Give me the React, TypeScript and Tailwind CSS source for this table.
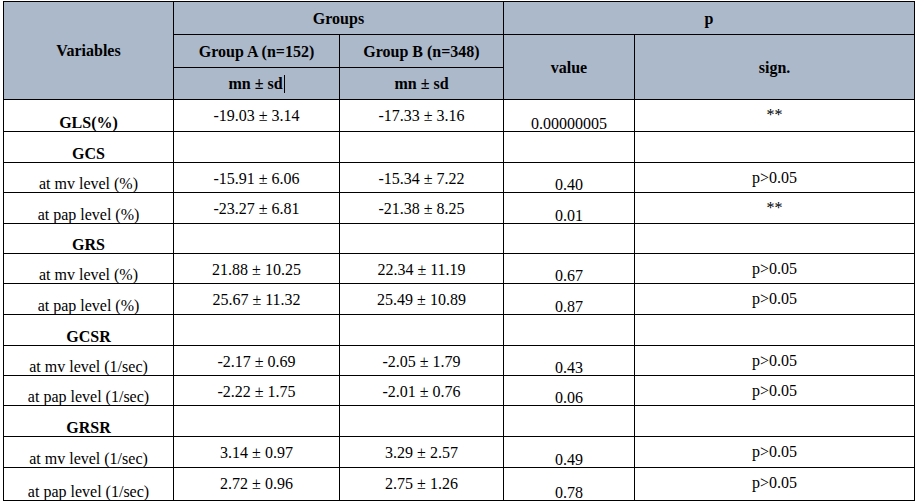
import React from "react";

type Row = { label: string; bold?: boolean; a?: string; b?: string; v?: string; s?: string };

const rows: Row[] = [
  { label: "GLS(%)", bold: true, a: "-19.03 ± 3.14", b: "-17.33 ± 3.16", v: "0.00000005", s: "**" },
  { label: "GCS", bold: true },
  { label: "at mv level (%)", a: "-15.91 ± 6.06", b: "-15.34 ± 7.22", v: "0.40", s: "p>0.05" },
  { label: "at pap level (%)", a: "-23.27 ± 6.81", b: "-21.38 ± 8.25", v: "0.01", s: "**" },
  { label: "GRS", bold: true },
  { label: "at mv level (%)", a: "21.88 ± 10.25", b: "22.34 ± 11.19", v: "0.67", s: "p>0.05" },
  { label: "at pap level (%)", a: "25.67 ± 11.32", b: "25.49 ± 10.89", v: "0.87", s: "p>0.05" },
  { label: "GCSR", bold: true },
  { label: "at mv level (1/sec)", a: "-2.17 ± 0.69", b: "-2.05 ± 1.79", v: "0.43", s: "p>0.05" },
  { label: "at pap level (1/sec)", a: "-2.22 ± 1.75", b: "-2.01 ± 0.76", v: "0.06", s: "p>0.05" },
  { label: "GRSR", bold: true },
  { label: "at mv level (1/sec)", a: "3.14 ± 0.97", b: "3.29 ± 2.57", v: "0.49", s: "p>0.05" },
  { label: "at pap level (1/sec)", a: "2.72 ± 0.96", b: "2.75 ± 1.26", v: "0.78", s: "p>0.05" },
];

const hd = "bg-[#acb9ca] flex items-center justify-center font-bold";

export default function App() {
  return (
    <div className="w-[916px] h-[502px] bg-white pt-[1px] pl-[3px] font-['Liberation_Serif','Times_New_Roman',serif]">
      <div className="grid w-[912px] bg-black gap-px p-px text-[16px] leading-[17px] text-black grid-cols-[169px_165px_163px_130px_279px] grid-rows-[32px_32px_31px_31px_30px_29px_30px_29px_29px_30px_30px_29px_29px_30px_30px_32px]">
        <div className={`${hd} row-span-3`}>Variables</div>
        <div className={`${hd} col-span-2`}>Groups</div>
        <div className={`${hd} col-span-2`}>p</div>
        <div className={hd}>Group A (n=152)</div>
        <div className={hd}>Group B (n=348)</div>
        <div className={`${hd} row-span-2`}>value</div>
        <div className={`${hd} row-span-2`}>sign.</div>
        <div className={hd}>
          mn ± sd<span className="inline-block w-px h-[18px] bg-black ml-[1px]" />
        </div>
        <div className={hd}>mn ± sd</div>
        {rows.map((r, i) => (
          <React.Fragment key={i}>
            <div className={`bg-white flex items-end justify-center ${r.bold ? "font-bold" : ""}`}>{r.label}</div>
            <div className="bg-white flex items-start justify-center pt-[7px]">{r.a ?? ""}</div>
            <div className="bg-white flex items-start justify-center pt-[7px]">{r.b ?? ""}</div>
            <div className="bg-white flex items-end justify-center leading-[14px]">{r.v ?? ""}</div>
            <div className="bg-white flex items-start justify-center pt-[6px]">{r.s ?? ""}</div>
          </React.Fragment>
        ))}
      </div>
    </div>
  );
}
